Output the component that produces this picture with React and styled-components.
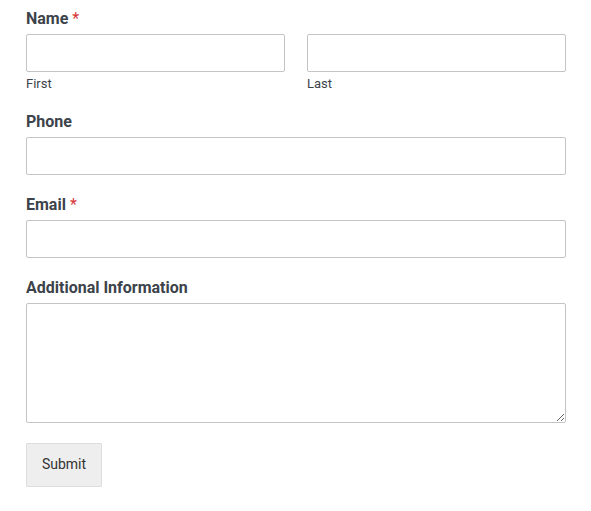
import React from "react";
import styled, { createGlobalStyle } from "styled-components";

const GlobalStyle = createGlobalStyle`
  body {
    margin: 0;
    background: #fff;
    font-family: Roboto, "Liberation Sans", Arial, sans-serif;
  }
`;

const App = () => {
  return (
    <>
      <GlobalStyle />
      <Form onSubmit={e => e.preventDefault()}>
        <Field>
          <Label>
            Name <Req>*</Req>
          </Label>
          <Row>
            <Col>
              <Input type="text" />
              <SubLabel>First</SubLabel>
            </Col>
            <Col>
              <Input type="text" />
              <SubLabel>Last</SubLabel>
            </Col>
          </Row>
        </Field>
        <Field>
          <Label>Phone</Label>
          <Input type="tel" />
        </Field>
        <Field>
          <Label>
            Email <Req>*</Req>
          </Label>
          <Input type="email" />
        </Field>
        <Field>
          <Label>Additional Information</Label>
          <TextArea />
        </Field>
        <Submit type="submit">Submit</Submit>
      </Form>
    </>
  );
};

const Form = styled.form`
  width: 540px;
  padding: 9px 0 0 26px;
  display: flex;
  flex-direction: column;
  align-items: flex-start;
`;
const Field = styled.div`
  width: 100%;
  margin-bottom: 20px;
  display: flex;
  flex-direction: column;
`;
const Label = styled.label`
  font-size: 16px;
  line-height: 20px;
  font-weight: 700;
  color: #3c434a;
  margin-bottom: 5px;
`;
const Req = styled.span`
  color: #d63638;
  font-weight: 400;
`;
const Row = styled.div`
  display: flex;
  gap: 22px;
`;
const Col = styled.div`
  flex: 1;
  display: flex;
  flex-direction: column;
`;
const Input = styled.input`
  box-sizing: border-box;
  width: 100%;
  height: 38px;
  border: 1px solid #c3c4c7;
  border-radius: 2px;
  background: #fff;
  padding: 0 10px;
  font: inherit;
  outline: none;
`;
const SubLabel = styled.span`
  margin-top: 3px;
  font-size: 13px;
  line-height: 17px;
  color: #3c434a;
`;
const TextArea = styled.textarea`
  box-sizing: border-box;
  width: 100%;
  height: 120px;
  border: 1px solid #c3c4c7;
  border-radius: 2px;
  background: #fff;
  padding: 8px 10px;
  font: inherit;
  outline: none;
  display: block;
`;
const Submit = styled.button`
  width: 76px;
  height: 44px;
  padding: 0 0 2px;
  background: #eeeeee;
  border: 1px solid #dddddd;
  border-radius: 1px;
  font-family: Roboto, "Liberation Sans", Arial, sans-serif;
  font-size: 14px;
  color: #333;
  cursor: pointer;
`;

export default App;
